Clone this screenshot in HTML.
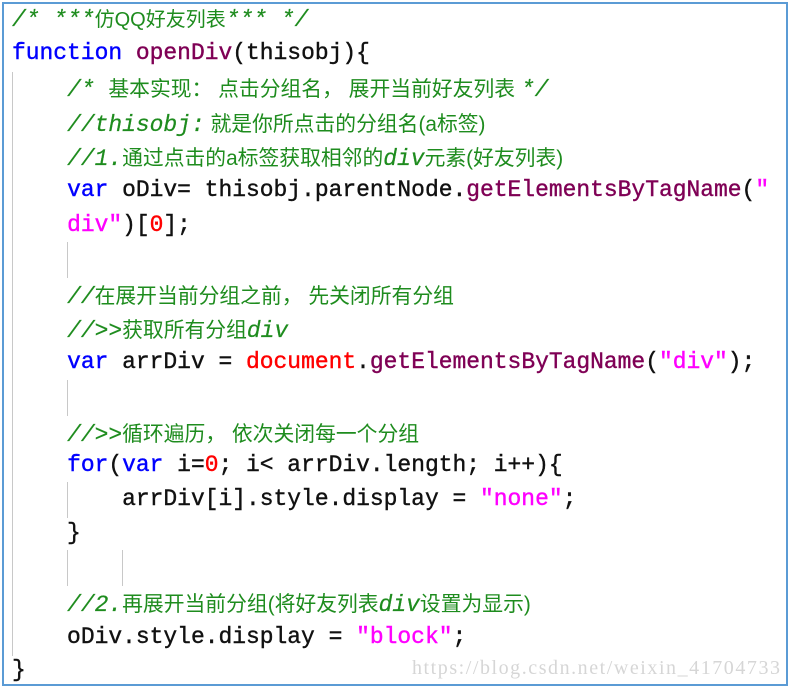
<!DOCTYPE html>
<html><head><meta charset="utf-8"><style>
body{margin:0;background:#fff;width:792px;height:692px;overflow:hidden;position:relative}
.frame{position:absolute;left:2px;top:2px;width:786px;height:684px;border:2px solid #5b9bd5;box-sizing:border-box}
.l{position:absolute;left:12px;white-space:pre;font-family:"Liberation Mono",monospace;font-size:22.95px;line-height:30px;color:#111;-webkit-text-stroke:0.4px currentColor}
.c{color:#1e8c1e;-webkit-text-stroke:0.2px currentColor}
.c i{font-style:italic}
.z{font-family:"Liberation Sans","Noto Sans CJK SC",sans-serif;font-size:20.8px;-webkit-text-stroke:0}
.z1{font-size:20px}
.k{color:#0000ff}
.f{color:#7f0055}
.s{color:#ff00ff}
.r{color:#ff0000}
.v{position:absolute;width:1px;background:#c8c8c8}
.wm{position:absolute;left:412px;top:657px;font-family:"Liberation Serif",serif;font-size:20px;color:#d6d6d6;letter-spacing:1.55px}
</style></head><body>
<div class="frame"></div>
<div class="v" style="left:12px;top:72px;height:584px"></div>
<div class="v" style="left:67px;top:242px;height:36px"></div>
<div class="v" style="left:67px;top:380px;height:36px"></div>
<div class="v" style="left:67px;top:482px;height:36px"></div>
<div class="v" style="left:67px;top:550px;height:36px"></div>
<div class="v" style="left:122px;top:550px;height:36px"></div>
<div class="l c" style="top:5px"><i>/* ***</i><span class="z z1">仿QQ好友列表</span><i>*** */</i></div>
<div class="l" style="top:38px"><span class="k">function</span> <span class="f">openDiv</span>(thisobj){</div>
<div class="l c" style="top:75px">    <i>/* </i><span class="z">基本实现： 点击分组名， 展开当前好友列表 </span><i>*/</i></div>
<div class="l c" style="top:110px">    <i>//thisobj:</i><span class="z"> 就是你所点击的分组名(a标签)</span></div>
<div class="l c" style="top:144px">    <i>//1.</i><span class="z">通过点击的a标签获取相邻的</span><i>div</i><span class="z">元素(好友列表)</span></div>
<div class="l" style="top:175px">    <span class="k">var</span> oDiv= thisobj.parentNode.<span class="f">getElementsByTagName</span>(<span class="s">"</span></div>
<div class="l" style="top:210px">    <span class="s">div"</span>)[<span class="r">0</span>];</div>
<div class="l c" style="top:282px">    <i>//</i><span class="z">在展开当前分组之前， 先关闭所有分组</span></div>
<div class="l c" style="top:316px">    <i>//&gt;&gt;</i><span class="z">获取所有分组</span><i>div</i></div>
<div class="l" style="top:347px">    <span class="k">var</span> arrDiv = <span class="r">document</span>.<span class="f">getElementsByTagName</span>(<span class="s">"div"</span>);</div>
<div class="l c" style="top:420px">    <i>//&gt;&gt;</i><span class="z">循环遍历， 依次关闭每一个分组</span></div>
<div class="l" style="top:450px">    <span class="k">for</span>(<span class="k">var</span> i=<span class="r">0</span>; i&lt; arrDiv.length; i++){</div>
<div class="l" style="top:484px">        arrDiv[i].style.display = <span class="s">"none"</span>;</div>
<div class="l" style="top:518px">    }</div>
<div class="l c" style="top:590px">    <i>//2.</i><span class="z">再展开当前分组(将好友列表</span><i>div</i><span class="z">设置为显示)</span></div>
<div class="l" style="top:622px">    oDiv.style.display = <span class="s">"block"</span>;</div>
<div class="l" style="top:655px">}</div>
<div class="wm">https://blog.csdn.net/weixin_41704733</div>
</body></html>
